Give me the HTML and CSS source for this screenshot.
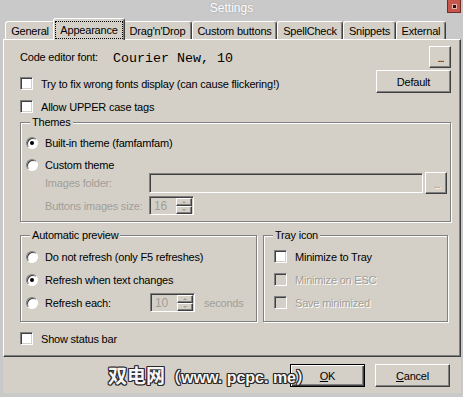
FILE: index.html
```html
<!DOCTYPE html>
<html>
<head>
<meta charset="utf-8">
<title>Settings</title>
<link rel="stylesheet" href="styles.css">
</head>
<body>
<div class="window">
  <div class="titlebar">
    <span></span>
    <span class="title">Settings</span>
    <span class="close"><i></i></span>
  </div>
  <div class="client">
    <div class="tabs">
      <div class="tab t-general">General</div>
      <div class="tab active"><span class="focus">Appearance</span></div>
      <div class="tab t-drag">Drag'n'Drop</div>
      <div class="tab t-custom">Custom buttons</div>
      <div class="tab t-spell">SpellCheck</div>
      <div class="tab t-snip">Snippets</div>
      <div class="tab t-ext">External</div>
    </div>
    <div class="panel">
      <div class="top">
        <div class="top-left">
          <div class="font-row"><span class="font-label">Code editor font:</span><span class="mono">Courier New, 10</span></div>
          <div class="row cbrow"><span class="cb"></span>Try to fix wrong fonts display (can cause flickering!)</div>
          <div class="row cbrow"><span class="cb"></span>Allow UPPER case tags</div>
        </div>
        <div class="top-right">
          <button class="btn dots">...</button>
          <button class="btn default">Default</button>
        </div>
      </div>

      <div class="group themes">
        <span class="legend">Themes</span>
        <div class="row r1"><span class="radio on"></span>Built-in theme (famfamfam)</div>
        <div class="row r2"><span class="radio"></span>Custom theme</div>
        <div class="row sub folder">
          <span class="sublabel dis">Images folder:</span>
          <span class="field"></span>
          <span class="btn dots dis">...</span>
        </div>
        <div class="row sub size">
          <span class="sublabel dis">Buttons images size:</span>
          <span class="spin"><span class="spin-val">16</span><span class="spin-btns"><span class="arr up"></span><span class="arr down"></span></span></span>
        </div>
      </div>

      <div class="lower">
        <div class="group preview">
          <span class="legend">Automatic preview</span>
          <div class="row prow"><span class="radio"></span>Do not refresh (only F5 refreshes)</div>
          <div class="row prow"><span class="radio on"></span>Refresh when text changes</div>
          <div class="row prow">
            <span class="radio"></span><span class="each-label">Refresh each:</span>
            <span class="spin"><span class="spin-val">10</span><span class="spin-btns"><span class="arr up"></span><span class="arr down"></span></span></span>
            <span class="seconds dis">seconds</span>
          </div>
        </div>
        <div class="group tray">
          <span class="legend">Tray icon</span>
          <div class="row prow"><span class="cb"></span>Minimize to Tray</div>
          <div class="row prow dis"><span class="cb off"></span>Minimize on ESC</div>
          <div class="row prow dis"><span class="cb off"></span>Save minimized</div>
        </div>
      </div>

      <div class="row status"><span class="cb"></span>Show status bar</div>
    </div>
    <div class="footer">
      <span class="watermark"><span class="wm-cjk">双电网</span>（www. pcpc. me）</span>
      <button class="btn action focused"><span><u>O</u>K</span></button>
      <button class="btn action"><span><u>C</u>ancel</span></button>
    </div>
  </div>
</div>
</body>
</html>
```

FILE: styles.css
```css
html, body {
  margin: 0;
  padding: 0;
  background: #c9c9c9;
}

body {
  font-family: "Liberation Sans", Arial, sans-serif;
  font-size: 11px;
  letter-spacing: -0.2px;
  color: #000;
}

.window {
  width: 463px;
  height: 397px;
  background: #c9c9c9;
  display: flex;
  flex-direction: column;
  overflow: hidden;
}

/* title bar */
.titlebar {
  height: 18px;
  flex: none;
  display: grid;
  grid-template-columns: 1fr auto 1fr;
  align-items: start;
}

.title {
  color: #fff;
  font-size: 12px;
  line-height: 14px;
  padding-top: 1px;
  letter-spacing: 0;
  text-shadow: 0 0 2px #9a9a9a;
}

.close {
  justify-self: end;
  width: 14px;
  height: 13px;
  margin-right: 2px;
  box-sizing: border-box;
  background: #c4564c;
  border: 1px solid #6e2c26;
  border-top: none;
  display: flex;
  align-items: center;
  justify-content: center;
}

.close i {
  width: 3px;
  height: 3px;
  background: #2b0e0b;
  box-shadow: 0 0 0 1px #e6b2aa;
}

/* client area */
.client {
  flex: 1;
  margin: 0 2px 4px 3px;
  background: #d4d0c8;
  display: flex;
  flex-direction: column;
}

.tabs {
  height: 21px;
  flex: none;
  display: flex;
  align-items: flex-end;
  padding-left: 2px;
  background: #c9c9c9;
}

.tab {
  height: 18px;
  flex: none;
  box-sizing: border-box;
  padding: 0;
  border: 1px solid;
  border-color: #fff #404040 transparent #fff;
  border-bottom: none;
  border-radius: 3px 3px 0 0;
  box-shadow: inset -1px 0 #808080;
  background: #d4d0c8;
  display: flex;
  align-items: center;
  justify-content: center;
  white-space: nowrap;
}

.t-general { width: 50px; }
.t-drag { width: 69px; }
.t-custom { width: 85px; }
.t-spell { width: 66px; }
.t-snip { width: 53px; }
.t-ext { width: 50px; }

.tab.active {
  width: 72px;
  height: 22px;
  margin: 0 -2px -1px -2px;
  padding: 1px;
  position: relative;
  z-index: 1;
  align-items: stretch;
  justify-content: stretch;
}

.focus {
  flex: 1;
  display: flex;
  align-items: center;
  justify-content: center;
  border: 1px dotted #000;
  margin-top: 1px;
}

/* panel */
.panel {
  height: 318px;
  flex: none;
  box-sizing: border-box;
  border: 1px solid;
  border-color: #fff #404040 #404040 #fff;
  box-shadow: inset -1px -1px #808080;
  padding: 6px 9px 0 16px;
  display: flex;
  flex-direction: column;
}

.top {
  display: flex;
  justify-content: space-between;
}

.top-left {
  display: flex;
  flex-direction: column;
}

.font-row {
  height: 22px;
  display: flex;
  align-items: center;
  margin-bottom: 4px;
}

.font-label {
  width: 93px;
}

.mono {
  font-family: "Liberation Mono", "Courier New", monospace;
  font-size: 13.33px;
  letter-spacing: 0;
  padding-top: 2px;
}

.row {
  display: flex;
  align-items: center;
  white-space: nowrap;
}

.cbrow {
  height: 23px;
}

.top-right {
  display: flex;
  flex-direction: column;
  align-items: flex-end;
}

/* buttons */
.btn {
  box-sizing: border-box;
  border: 1px solid;
  border-color: #fff #404040 #404040 #fff;
  box-shadow: inset -1px -1px #808080;
  background: #d4d0c8;
  font: inherit;
  letter-spacing: inherit;
  color: #000;
  padding: 0;
  margin: 0;
  display: flex;
  align-items: center;
  justify-content: center;
}

.btn.dots {
  width: 22px;
  height: 22px;
  letter-spacing: -1px;
  padding-top: 2px;
  padding-left: 1px;
  font-size: 11px;
}

.btn.dots.dis {
  color: #a19e98;
  text-shadow: 1px 1px #fff;
  flex: none;
}

.btn.default {
  width: 75px;
  height: 23px;
  margin-top: 2px;
}

/* checkbox & radio */
.cb {
  width: 13px;
  height: 13px;
  flex: none;
  box-sizing: border-box;
  border: 1px solid;
  border-color: #808080 #fff #fff #808080;
  box-shadow: inset 1px 1px #404040, inset -1px -1px #d4d0c8;
  background: #fff;
  margin-right: 8px;
}

.cb.off {
  background: #d4d0c8;
}

.radio {
  width: 12px;
  height: 12px;
  flex: none;
  box-sizing: border-box;
  border-radius: 50%;
  border: 1px solid;
  border-color: #808080 #fff #fff #808080;
  box-shadow: inset 1px 1px #404040;
  background: #fff;
  margin-right: 7px;
  display: flex;
  align-items: center;
  justify-content: center;
}

.radio.on::after {
  content: "";
  width: 4px;
  height: 4px;
  border-radius: 50%;
  background: #000;
}

/* group boxes */
.group {
  position: relative;
  border: 1px solid #808080;
  box-shadow: inset 1px 1px #fff, 1px 1px #fff;
  display: flex;
  flex-direction: column;
}

.legend {
  position: absolute;
  top: -7px;
  left: 9px;
  padding: 0 2px;
  line-height: 13px;
  background: #d4d0c8;
  white-space: nowrap;
}

.dis {
  color: #a19e98;
}

.row.dis {
  text-shadow: 1px 1px #fff;
}

.themes {
  margin-top: 4px;
  padding: 9px 3px 6px 5px;
}

.r1 { height: 22px; }
.r2 { height: 22px; }

.sub {
  padding-left: 19px;
}

.folder {
  height: 22px;
  margin-top: -4px;
}

.size {
  height: 19px;
  margin-top: 2px;
}

.sublabel {
  width: 104px;
  flex: none;
}

.field {
  flex: 1;
  height: 20px;
  box-sizing: border-box;
  border: 1px solid;
  border-color: #808080 #fff #fff #808080;
  box-shadow: inset 1px 1px #404040, inset -1px -1px #d4d0c8;
  background: #d4d0c8;
  margin-right: 2px;
}

.spin {
  width: 45px;
  height: 19px;
  flex: none;
  box-sizing: border-box;
  border: 1px solid;
  border-color: #808080 #fff #fff #808080;
  box-shadow: inset 1px 1px #404040;
  background: #d4d0c8;
  display: flex;
  padding: 1px 1px 0 1px;
}

.spin-val {
  flex: 1;
  color: #a19e98;
  font-size: 12px;
  padding-left: 3px;
  line-height: 16px;
}

.spin-btns {
  width: 16px;
  display: flex;
  flex-direction: column;
}

.arr {
  flex: 1;
  box-sizing: border-box;
  border: 1px solid;
  border-color: #fff #404040 #404040 #fff;
  box-shadow: inset -1px -1px #808080;
  display: flex;
  align-items: center;
  justify-content: center;
}

.arr::after {
  content: "";
  width: 0;
  height: 0;
  border-left: 2px solid transparent;
  border-right: 2px solid transparent;
}

.arr.up::after {
  border-bottom: 2px solid #a19e98;
}

.arr.down::after {
  border-top: 2px solid #a19e98;
}

.lower {
  display: flex;
  gap: 6px;
  margin-top: 13px;
}

.preview {
  width: 237px;
  box-sizing: border-box;
  padding: 9px 0 7px 5px;
}

.tray {
  width: 185px;
  box-sizing: border-box;
  padding: 9px 0 7px 10px;
}

.prow {
  height: 23px;
}

.each-label {
  width: 105px;
}

.seconds {
  margin-left: 9px;
}

.status {
  height: 23px;
  margin-top: 5px;
}

/* footer */
.footer {
  flex: 1;
  position: relative;
  display: flex;
  justify-content: flex-end;
  align-items: flex-start;
  gap: 10px;
  padding: 7px 11px 0 0;
}

.btn.action {
  width: 75px;
  height: 23px;
}

.btn.focused {
  border-color: #000;
  box-shadow: inset 1px 1px #fff, inset -1px -1px #404040, inset -2px -2px #808080;
}

.watermark {
  position: absolute;
  left: 105px;
  top: 7px;
  font-family: "Liberation Sans", "Noto Sans CJK SC", sans-serif;
  font-size: 16px;
  line-height: 22px;
  font-weight: bold;
  letter-spacing: 0;
  color: #f6f6f6;
  white-space: nowrap;
  text-shadow: 1px 0 #2a2a2a, -1px 0 #2a2a2a, 0 1px #2a2a2a, 0 -1px #2a2a2a, 1px 1px #2a2a2a, -1px -1px #2a2a2a, 1px -1px #2a2a2a, -1px 1px #2a2a2a;
  z-index: 2;
}

.wm-cjk {
  font-family: "Noto Sans CJK SC", sans-serif;
  font-size: 19px;
}
```
